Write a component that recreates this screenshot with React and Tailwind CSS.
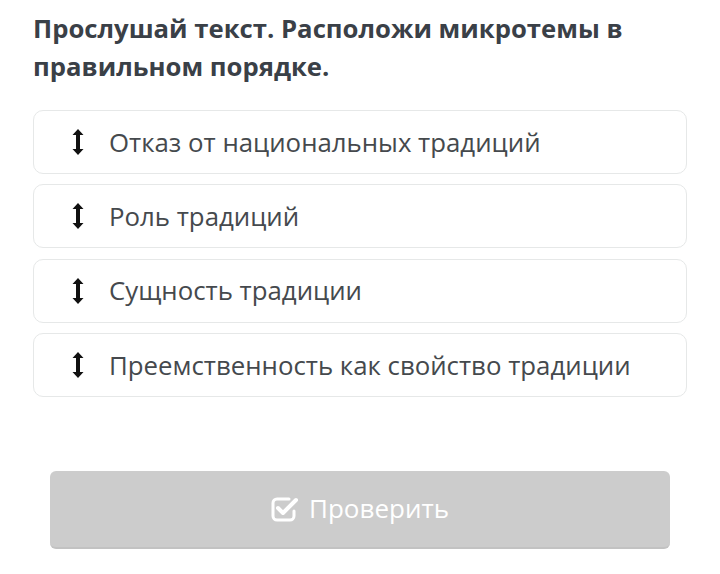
import React from 'react';

const items = [
  'Отказ от национальных традиций',
  'Роль традиций',
  'Сущность традиции',
  'Преемственность как свойство традиции',
];

function ArrowsV() {
  return (
    <svg width="12" height="26" viewBox="0 0 12 26" className="shrink-0">
      <path d="M6 0 L11.5 6 L8 6 L8 20 L11.5 20 L6 26 L0.5 20 L4 20 L4 6 L0.5 6 Z" fill="#111" />
    </svg>
  );
}

function CheckSquare() {
  return (
    <svg width="28" height="26" viewBox="0 0 28 26" className="shrink-0">
      <path
        d="M18 3 H6 A4 4 0 0 0 2 7 V20 A4 4 0 0 0 6 24 H19 A4 4 0 0 0 23 20 V15"
        fill="none"
        stroke="#fff"
        strokeWidth="3"
        strokeLinecap="round"
      />
      <path
        d="M7 12 L12 17 L25 4"
        fill="none"
        stroke="#fff"
        strokeWidth="4"
        strokeLinecap="round"
        strokeLinejoin="round"
      />
    </svg>
  );
}

export default function App() {
  return (
    <div className="w-[720px] h-[574px] bg-white px-[33px] pt-[10px]" style={{ fontFamily: '"Open Sans", sans-serif' }}>
      <h1 className="text-[25.7px] leading-[38px] font-bold text-[#3a4047]">
        Прослушай текст. Расположи микротемы в правильном порядке.
      </h1>

      <div className="mt-[24px] flex flex-col gap-[10.3px]">
        {items.map((t) => (
          <div
            key={t}
            className="h-[64px] rounded-[10px] border border-[#e6e8e8] flex items-center pl-[38px] gap-[25px]"
          >
            <ArrowsV />
            <span className="text-[25.8px] text-[#45494d]">{t}</span>
          </div>
        ))}
      </div>

      <div className="mt-[74px] px-[17px]">
        <div className="h-[78px] rounded-[6px] bg-[#cccccc] border-b-2 border-[#c2c2c2] flex items-center justify-center gap-[10px]">
          <CheckSquare />
          <span className="text-[26px] text-white">Проверить</span>
        </div>
      </div>
    </div>
  );
}
